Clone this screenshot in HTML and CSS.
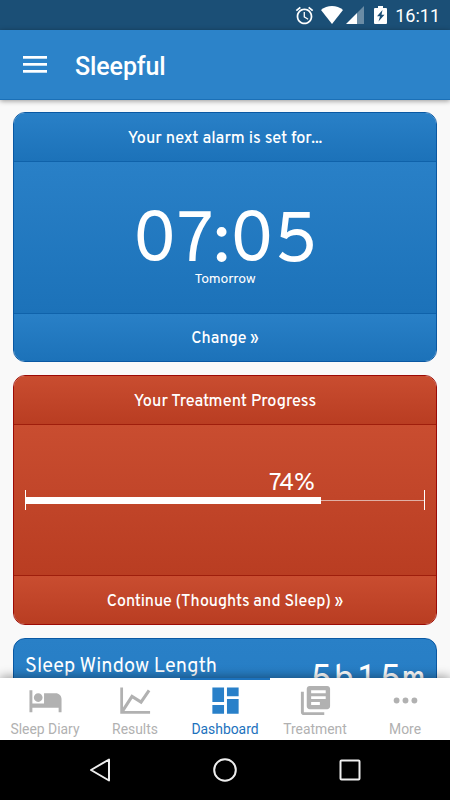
FILE: index.html
```
<!DOCTYPE html>
<html lang="en">
<head>
    <meta charset="UTF-8">
    <meta name="viewport" content="width=device-width, initial-scale=1.0">
    <title>Sleepful</title>
    <link rel="stylesheet" href="styles.css">
</head>
<body>
    <div class="status-bar">
        <svg class="icon-alarm" viewBox="0 0 24 24"><path d="M22 5.72l-4.6-3.86-1.29 1.53 4.6 3.86L22 5.72zM7.88 3.39L6.6 1.86 2 5.71l1.29 1.53 4.59-3.85zM12.5 8H11v6l4.75 2.85.75-1.23-4-2.37V8zM12 4c-4.97 0-9 4.03-9 9s4.02 9 9 9c4.97 0 9-4.03 9-9s-4.03-9-9-9zm0 16c-3.87 0-7-3.13-7-7s3.13-7 7-7 7 3.13 7 7-3.13 7-7 7z"/></svg>
        <svg class="icon-wifi" viewBox="0 0 22 18"><path d="M11 18L0 4C3 1.500 7 0 11 0s8 1.500 11 4z"/></svg>
        <svg class="icon-signal" viewBox="0 0 18 18"><path d="M18 0v18h-7V7z" opacity=".35"/><path d="M11 7v11H0z"/></svg>
        <svg class="icon-battery" viewBox="0 0 13 18"><path fill-rule="evenodd" d="M4 0h5v2h3q1 0 1 1v14q0 1-1 1H1q-1 0-1-1V3q0-1 1-1h3zM8.500 4L3 10.300h3L4.500 15.500 10.500 8.700H7.500z"/></svg>
        <span class="clock">16:11</span>
    </div>
    <header>
        <div class="menu-btn"><span></span><span></span><span></span></div>
        <h1>Sleepful</h1>
    </header>

    <main>
        <section class="card blue">
            <div class="card-head">Your next alarm is set for...</div>
            <div class="card-body alarm">
                <div class="time">07:05</div>
                <div class="day">Tomorrow</div>
            </div>
            <div class="card-foot">Change »</div>
        </section>

        <section class="card red">
            <div class="card-head">Your Treatment Progress</div>
            <div class="card-body progress">
                <div class="percent">74%</div>
                <div class="track">
                    <div class="fill" style="width: 74%"></div>
                    <div class="rest"></div>
                </div>
            </div>
            <div class="card-foot">Continue (Thoughts and Sleep) »</div>
        </section>

        <section class="card blue window">
            <div class="window-title">Sleep Window Length</div>
            <div class="window-value">5h15m</div>
        </section>
    </main>

    <nav class="tabs">
        <div class="tab">
            <svg viewBox="0 0 24 24"><path d="M7 13c1.660 0 3-1.340 3-3S8.660 7 7 7s-3 1.340-3 3 1.340 3 3 3zm12-6h-8v7H3V5H1v15h2v-3h18v3h2v-9c0-2.210-1.790-4-4-4z"/></svg>
            <span>Sleep Diary</span>
        </div>
        <div class="tab">
            <svg viewBox="0 0 24 24"><path d="M2.500 3v17.200h19.500" fill="none" stroke="currentColor" stroke-width="1.900"/><path d="M3 19.500L9.600 9.200l6.200 3.900L21.300 5" fill="none" stroke="currentColor" stroke-width="2.100"/></svg>
            <span>Results</span>
        </div>
        <div class="tab active">
            <svg viewBox="0 0 24 24"><path d="M3 13h8V3H3v10zm0 8h8v-6H3v6zm10 0h8V11h-8v10zm0-18v6h8V3h-8z"/></svg>
            <span>Dashboard</span>
        </div>
        <div class="tab">
            <svg viewBox="0 0 24 24"><path d="M4 6H2v14c0 1.100.9 2 2 2h14v-2H4V6zm16-4H8c-1.100 0-2 .9-2 2v12c0 1.100.9 2 2 2h12c1.100 0 2-.9 2-2V4c0-1.100-.9-2-2-2zm-1 9H9V9h10v2zm-4 4H9v-2h6v2zm4-8H9V5h10v2z"/></svg>
            <span>Treatment</span>
        </div>
        <div class="tab">
            <svg viewBox="0 0 24 24"><circle cx="5.900" cy="12" r="2"/><circle cx="12" cy="12" r="2"/><circle cx="18.100" cy="12" r="2"/></svg>
            <span>More</span>
        </div>
    </nav>

    <div class="system-nav">
        <svg viewBox="0 0 24 24"><path d="M21 1.500v21L3 12z"/></svg>
        <svg viewBox="0 0 24 24"><circle cx="12" cy="12" r="10.800"/></svg>
        <svg viewBox="0 0 24 24"><rect x="2.500" y="2.500" width="19" height="19" rx="1"/></svg>
    </div>
</body>
</html>
```
FILE: styles.css
```
* {
    box-sizing: border-box;
}
body {
    margin: 0;
    height: 800px;
    overflow: hidden;
    display: flex;
    flex-direction: column;
    background: #f9f9f9;
    color: #fff;
    font-family: Roboto, sans-serif;
}
.status-bar {
    flex: none;
    height: 30px;
    background: #1b4f76;
    display: flex;
    align-items: center;
    justify-content: flex-end;
    padding-right: 10px;
}
.status-bar svg {
    fill: #fff;
    height: 18px;
}
.status-bar .icon-alarm {
    width: 21px;
    height: 21px;
    margin-right: 6px;
}
.icon-wifi {
    width: 22px;
    margin-right: 3px;
}
.icon-signal {
    width: 18px;
    margin-right: 10px;
}
.icon-battery {
    width: 13px;
    margin-right: 8px;
}
.clock {
    font-size: 18px;
    font-weight: 400;
    line-height: 30px;
    padding-top: 1px;
}
header {
    flex: none;
    height: 70px;
    background: #2c83c9;
    border-bottom: 1px solid #1b70b7;
    box-shadow: 0 1px 5px rgba(0,0,0,0.4);
    display: flex;
    align-items: center;
    padding-left: 23px;
    z-index: 1;
}
.menu-btn {
    display: flex;
    flex-direction: column;
    gap: 4px;
    width: 24px;
    margin-right: 28px;
}
.menu-btn span {
    height: 3px;
    background: #fff;
    border-bottom: 1px solid #c3dcf0;
}
h1 {
    margin: 4px 0 0;
    font-size: 25px;
    font-weight: 500;
    letter-spacing: -0.1px;
}
main {
    flex: 1;
    min-height: 0;
    overflow: hidden;
    padding: 12px 13px 0;
    display: flex;
    flex-direction: column;
    gap: 13px;
}
.card {
    flex: none;
    height: 250px;
    border: 1px solid;
    border-radius: 12px;
    overflow: hidden;
    display: flex;
    flex-direction: column;
    font-family: Overpass, "Noto Sans", sans-serif;
}
.blue {
    border-color: #0958a3;
}
.red {
    border-color: #9c0a05;
}
.card-head, .card-foot {
    height: 48px;
    flex: none;
    display: flex;
    align-items: center;
    justify-content: center;
    padding-top: 4px;
    font-size: 16px;
    font-weight: 500;
}
.card-head {
    font-size: 16.3px;
}
.card-body {
    flex: 1;
    border-top: 1px solid;
    border-bottom: 1px solid;
}
.blue .card-head, .blue .card-body, .blue .card-foot {
    background: linear-gradient(#2980c7, #1c72b9);
    border-color: #0f62aa;
}
.red .card-head, .red .card-body, .red .card-foot {
    background: linear-gradient(#c94d30, #b93d22);
    border-color: #9f1e0c;
}
.alarm {
    display: flex;
    flex-direction: column;
    align-items: center;
    padding-top: 56px;
}
.alarm + .card-foot {
    height: 47px;
    padding-top: 3px;
}
.time {
    line-height: 52px;
    font-size: 70px;
    font-kerning: none;
}
.day {
    font-size: 14px;
    letter-spacing: -0.2px;
    line-height: 20px;
}
.progress {
    padding: 42px 11px 0;
}
.percent {
    width: 74%;
    padding-right: 6px;
    text-align: right;
    font-size: 24px;
    line-height: 23px;
    padding-top: 6px;
    margin-bottom: -6px;
}
.track {
    height: 20px;
    border-left: 1px solid #fff;
    border-right: 1px solid #fff;
    display: flex;
    align-items: center;
}
.fill {
    height: 7px;
    background: #fff;
}
.rest {
    flex: 1;
    height: 1px;
    background: #e0b0a5;
}
.window {
    flex-direction: row;
    justify-content: space-between;
    padding: 0 11px;
    background: linear-gradient(#2980c7, #1c72b9);
}
.window-title {
    font-size: 19.9px;
    line-height: 26px;
    padding-top: 15px;
}
.window-value {
    font-family: "Overpass Mono", "Liberation Mono", monospace;
    font-size: 37.4px;
    line-height: 44px;
    padding-top: 21px;
}
.tabs {
    flex: none;
    height: 62px;
    background: #fff;
    box-shadow: 0 -1px 10px rgba(0,0,0,0.4);
    display: flex;
    z-index: 1;
}
.tab {
    flex: 1;
    border-top: 2px solid transparent;
    padding-top: 3px;
    display: flex;
    flex-direction: column;
    align-items: center;
    color: #b1b1b1;
    font-size: 13.9px;
}
.tab svg {
    width: 35px;
    height: 35px;
    fill: currentColor;
}
.tab span {
    line-height: 20px;
    margin-top: 1px;
}
.tab.active {
    color: #1c72bd;
    border-top-color: #1c72bd;
}
.tab.active svg {
    color: #2980c9;
}
.system-nav {
    flex: none;
    height: 60px;
    background: #000;
    display: flex;
    align-items: center;
    justify-content: center;
    gap: 101px;
    z-index: 1;
}
.system-nav svg {
    width: 24px;
    height: 24px;
    fill: none;
    stroke: #eee;
    stroke-width: 2;
    stroke-linejoin: round;
}
```
